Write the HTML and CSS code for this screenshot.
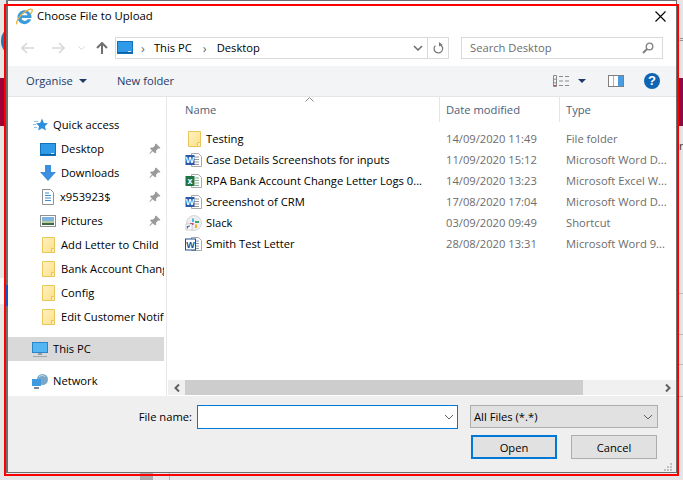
FILE: index.html
```html
<!DOCTYPE html>
<html lang="en">
<head>
  <meta charset="UTF-8" />
  <title>Choose File to Upload</title>
  <link rel="stylesheet" href="styles.css">
</head>
<body>

  <svg class="defs" width="0" height="0">
    <defs>
      <linearGradient id="folderFill" x1="0" y1="0" x2="1" y2="1">
        <stop offset="0" stop-color="#fff3c4"/>
        <stop offset="1" stop-color="#fcdf86"/>
      </linearGradient>
      <symbol id="folder" viewBox="0 0 13 16">
        <path d="M.5.5h12v15H.5z" fill="url(#folderFill)" stroke="#e9c65a"/>
        <path d="M9.5 15.5v-4h3v4z" fill="#fdf0b8" stroke="#e9c65a"/>
      </symbol>
      <symbol id="pin" viewBox="0 0 12 12">
        <path d="M7 .5L11.500 5l-1.200.8-1-.5-2.400 2.600.3 1.500-1 1L3.700 8.200 1 11l-.6-.6L3 7.500 1 5.400l1-1 1.500.3 2.700-2.300-.4-1z" fill="#9a9a9a"/>
      </symbol>
      <symbol id="desktop" viewBox="0 0 16 13">
        <rect x=".5" y=".5" width="15" height="12" fill="#2f9ae8" stroke="#1273bd"/>
        <path d="M1 11.500h14" stroke="#0b5c9c"/>
        <path d="M11 10.500h3" stroke="#cfe9fb"/>
      </symbol>
      <symbol id="word" viewBox="0 0 17 16">
        <path d="M6.500 1.500h7l3 3v10h-10z" fill="#fff" stroke="#a9a9a9"/>
        <path d="M9 5h5M9 7.500h5M9 10h5M9 12.500h5" stroke="#9a9a9a"/>
        <rect x=".5" y="3" width="9" height="10" fill="#2b5aa8"/>
        <text x="5" y="11.200" class="icon-letter" text-anchor="middle">W</text>
      </symbol>
    </defs>
  </svg>

  <!-- whatever is open behind the dialog -->
  <div class="behind">
    <div class="behind-band"></div>
    <div class="behind-circle"></div>
    <div class="behind-white"></div>
    <div class="behind-edge">
      <span class="behind-text">=</span>
    </div>
    <span class="behind-re">re</span>
    <div class="behind-line line-a"></div>
    <div class="behind-line line-b"></div>
    <div class="behind-line line-c"></div>
    <div class="behind-line line-d"></div>
    <div class="behind-block"></div>
    <div class="behind-rule"></div>
  </div>

  <div class="dialog">
    <div class="titlebar">
      <svg class="ie-icon" viewBox="0 0 17 17" width="17" height="17">
        <path d="M1.500 9a7 7 0 0 1 13.800-1.500l.2 2.500H5.500a3.200 3.200 0 0 0 6 1.200h3.700A7 7 0 0 1 1.500 9zM5.500 7.300h6.200a3.200 3.200 0 0 0-6.200 0z" fill="#3a9bdc"/>
        <path d="M1 16.200C-.5 14.500 3 8 8 4.500c3.500-2.500 7-4 8-3 .8 .9-.2 2.800-1.500 4.500" fill="none" stroke="#e8b23a" stroke-width="1.300"/>
      </svg>
      <span class="title">Choose File to Upload</span>
      <svg class="close-icon" viewBox="0 0 11 11" width="11" height="11">
        <path d="M.5.5l10 10M10.500.5l-10 10" stroke="#000" stroke-width="1.100"/>
      </svg>
    </div>

    <div class="navrow">
      <div class="nav-buttons">
        <svg viewBox="0 0 13 12" width="13" height="12"><path d="M6 1L1 6l5 5M1 6h12" fill="none" stroke="#d8d8d8" stroke-width="1.600"/></svg>
        <svg class="nav-forward" viewBox="0 0 13 12" width="13" height="12"><path d="M7 1l5 5-5 5M12 6H0" fill="none" stroke="#d8d8d8" stroke-width="1.600"/></svg>
        <svg class="nav-down" viewBox="0 0 7 4" width="7" height="4"><path d="M.5.500L3.500 3.500 6.500.5" fill="none" stroke="#d8d8d8"/></svg>
        <svg class="nav-up" viewBox="0 0 12 12" width="12" height="12"><path d="M1 6l5-5 5 5M6 1v11" fill="none" stroke="#707070" stroke-width="2"/></svg>
      </div>
      <div class="address">
        <svg class="address-pc" viewBox="0 0 16 13" width="16" height="13"><use href="#desktop"/></svg>
        <span class="crumb-sep">&#8250;</span>
        <span class="crumb">This PC</span>
        <span class="crumb-sep second">&#8250;</span>
        <span class="crumb">Desktop</span>
        <svg class="address-drop" viewBox="0 0 10 6" width="10" height="6"><path d="M1 1l4 4 4-4" fill="none" stroke="#6b6b6b" stroke-width="1.500"/></svg>
        <span class="address-refresh">
          <svg viewBox="0 0 11 12" width="11" height="12"><path d="M8 3.200A4.300 4.300 0 1 1 3 3.100" fill="none" stroke="#7a7a7a" stroke-width="1.300" transform="rotate(-10 5.500 7)"/><path d="M6 0l3.500 2.800-3.500 1.800z" fill="#7a7a7a"/></svg>
        </span>
      </div>
      <div class="search">
        <span class="search-text">Search Desktop</span>
        <svg viewBox="0 0 12 12" width="12" height="12"><circle cx="7.500" cy="4.500" r="3.300" fill="none" stroke="#808080" stroke-width="1.300"/><path d="M5 7l-4 4" stroke="#808080" stroke-width="2"/></svg>
      </div>
    </div>

    <div class="toolbar">
      <span class="tool organise">Organise</span>
      <span class="caret organise-caret"></span>
      <span class="tool new-folder">New folder</span>
      <svg class="view-icon" viewBox="0 0 16 12" width="16" height="12">
        <path d="M.5.500h3v11h-3zM.5 4.200h3M.5 7.800h3" fill="none" stroke="#8a8a8a"/>
        <path d="M6 1.500h4M12 1.500h4M6 6h4M12 6h4M6 10.500h4M12 10.500h4" stroke="#8a8a8a"/>
        <path d="M1 10h2v1H1z" fill="#d04040"/>
      </svg>
      <span class="caret view-caret"></span>
      <svg class="pane-icon" viewBox="0 0 16 12" width="16" height="12">
        <rect x=".5" y=".5" width="15" height="11" fill="#fff" stroke="#7f7f7f"/>
        <path d="M5.500 1v10" stroke="#b0b0b0"/>
        <rect x="10" y="1" width="5" height="10" fill="#4a9be0"/>
      </svg>
      <svg class="help-icon" viewBox="0 0 16 16" width="16" height="16">
        <circle cx="8" cy="8" r="8" fill="#0f64b4"/>
        <text x="8" y="12.400" class="help-mark" text-anchor="middle">?</text>
      </svg>
    </div>

    <div class="main">
      <div class="sidebar">
        <div class="side-row top first">
          <svg class="side-icon" viewBox="0 0 16 14" width="16" height="14">
            <path d="M10 .5L11.900 5l4.100.3-3.100 2.900 1 4.300L10 10.200 6.100 12.500l1-4.300L4 5.300 8.100 5z" fill="#2d8fdc"/>
            <path d="M2 3.500h4M1 6.500h3M2 9.500h3" stroke="#8cc4ee"/>
          </svg>
          <span class="side-text">Quick access</span>
        </div>
        <div class="side-row">
          <svg class="side-icon" viewBox="0 0 16 13" width="16" height="13"><use href="#desktop"/></svg>
          <span class="side-text">Desktop</span>
          <svg class="pin" viewBox="0 0 12 12" width="12" height="12"><use href="#pin"/></svg>
        </div>
        <div class="side-row">
          <svg class="side-icon" viewBox="0 0 16 16" width="16" height="16"><path d="M5 0h6v7h5l-8 9-8-9h5z" fill="#3a8fe0"/></svg>
          <span class="side-text">Downloads</span>
          <svg class="pin" viewBox="0 0 12 12" width="12" height="12"><use href="#pin"/></svg>
        </div>
        <div class="side-row">
          <svg class="side-icon" viewBox="0 0 16 16" width="16" height="16">
            <path d="M2.500.5h8l3 3v12h-11z" fill="#fff" stroke="#8f8f8f"/>
            <path d="M5 4h4M5 6.500h6M5 9h6M5 11.500h6" stroke="#3a8fd0"/>
          </svg>
          <span class="side-text tight">x953923$</span>
          <svg class="pin" viewBox="0 0 12 12" width="12" height="12"><use href="#pin"/></svg>
        </div>
        <div class="side-row">
          <svg class="side-icon" viewBox="0 0 16 12" width="16" height="12">
            <rect x=".5" y=".5" width="15" height="11" fill="#fff" stroke="#8f8f8f"/>
            <rect x="2" y="2" width="12" height="4" fill="#7fb2dc"/>
            <rect x="2" y="6" width="12" height="2" fill="#b9c9a0"/>
            <rect x="2" y="8" width="12" height="2" fill="#3f6a4a"/>
          </svg>
          <span class="side-text">Pictures</span>
          <svg class="pin" viewBox="0 0 12 12" width="12" height="12"><use href="#pin"/></svg>
        </div>
        <div class="side-row">
          <svg class="side-icon side-folder" viewBox="0 0 13 16" width="13" height="16"><use href="#folder"/></svg>
          <span class="side-text">Add Letter to Child</span>
        </div>
        <div class="side-row">
          <svg class="side-icon side-folder" viewBox="0 0 13 16" width="13" height="16"><use href="#folder"/></svg>
          <span class="side-text">Bank Account Change</span>
        </div>
        <div class="side-row">
          <svg class="side-icon side-folder" viewBox="0 0 13 16" width="13" height="16"><use href="#folder"/></svg>
          <span class="side-text">Config</span>
        </div>
        <div class="side-row">
          <svg class="side-icon side-folder" viewBox="0 0 13 16" width="13" height="16"><use href="#folder"/></svg>
          <span class="side-text">Edit Customer Notifications</span>
        </div>
        <div class="side-row top gap selected">
          <svg class="side-icon" viewBox="0 0 16 15" width="16" height="15">
            <rect x=".5" y=".5" width="15" height="10" fill="#53b6f2" stroke="#2a86c8"/>
            <path d="M6 12h4" stroke="#9a9a9a" stroke-width="2"/>
            <path d="M1 14.500h14" stroke="#a0a8b0"/>
          </svg>
          <span class="side-text">This PC</span>
        </div>
        <div class="side-row top gap">
          <svg class="side-icon" viewBox="0 0 16 15" width="16" height="15">
            <circle cx="10.500" cy="5.500" r="5.500" fill="#7aa6c8"/>
            <path d="M7 3c2-2 5-2 6 0" stroke="#cfe2f0" fill="none"/>
            <rect x="0" y="5" width="9" height="7" fill="#3f9ae0"/>
            <path d="M2 14h5" stroke="#7a8a9a" stroke-width="2"/>
          </svg>
          <span class="side-text">Network</span>
        </div>
      </div>

      <div class="list">
        <div class="list-head">
          <svg class="sort-mark" viewBox="0 0 9 5" width="9" height="5"><path d="M.5 4.500l4-4 4 4" fill="none" stroke="#8a8a8a"/></svg>
          <div class="col col-name">Name</div>
          <div class="col col-date">Date modified</div>
          <div class="col col-type">Type</div>
        </div>

        <div class="rows">
          <div class="file-row">
            <div class="file-name">
              <span class="file-icon"><svg class="folder-file" viewBox="0 0 13 16" width="13" height="16"><use href="#folder"/></svg></span>
              <span>Testing</span>
            </div>
            <div class="file-date">14/09/2020 11:49</div>
            <div class="file-type">File folder</div>
          </div>
          <div class="file-row">
            <div class="file-name">
              <span class="file-icon"><svg viewBox="0 0 17 16" width="17" height="16"><use href="#word"/></svg></span>
              <span>Case Details Screenshots for inputs</span>
            </div>
            <div class="file-date">11/09/2020 15:12</div>
            <div class="file-type">Microsoft Word D...</div>
          </div>
          <div class="file-row">
            <div class="file-name">
              <span class="file-icon">
                <svg viewBox="0 0 17 16" width="17" height="16">
                  <path d="M6.500 1.500h7l3 3v10h-10z" fill="#fff" stroke="#a9a9a9"/>
                  <path d="M10 5h4M10 7.500h4M10 10h4M10 12.500h4" stroke="#7fae8f"/>
                  <rect x=".5" y="3" width="9" height="10" fill="#1f7244"/>
                  <text x="5" y="11.200" class="icon-letter" text-anchor="middle">x</text>
                </svg>
              </span>
              <span>RPA Bank Account Change Letter Logs 0...</span>
            </div>
            <div class="file-date">14/09/2020 13:23</div>
            <div class="file-type">Microsoft Excel W...</div>
          </div>
          <div class="file-row">
            <div class="file-name">
              <span class="file-icon"><svg viewBox="0 0 17 16" width="17" height="16"><use href="#word"/></svg></span>
              <span>Screenshot of CRM</span>
            </div>
            <div class="file-date">17/08/2020 17:04</div>
            <div class="file-type">Microsoft Word D...</div>
          </div>
          <div class="file-row">
            <div class="file-name">
              <span class="file-icon">
                <svg viewBox="0 0 17 16" width="17" height="16">
                  <circle cx="9" cy="8" r="7.500" fill="#eeeeee" stroke="#d8d8d8"/>
                  <path d="M8 3.500v3.500" stroke="#4fb8e0" stroke-width="2"/>
                  <path d="M10 7h4" stroke="#3aa870" stroke-width="2"/>
                  <path d="M11 9.500v3.500" stroke="#e8b23a" stroke-width="2"/>
                  <path d="M5 9h3.500" stroke="#c8386a" stroke-width="2"/>
                  <rect x="1" y="9" width="6" height="6" fill="#fff" stroke="#b0b0b0" stroke-width=".6"/>
                  <path d="M2.500 13.500V11.500L5 11" fill="none" stroke="#2b6cc0" stroke-width="1.200"/>
                </svg>
              </span>
              <span>Slack</span>
            </div>
            <div class="file-date">03/09/2020 09:49</div>
            <div class="file-type">Shortcut</div>
          </div>
          <div class="file-row">
            <div class="file-name">
              <span class="file-icon">
                <svg viewBox="0 0 17 16" width="17" height="16">
                  <path d="M6.500 1.500h7l3 3v10h-10z" fill="#fff" stroke="#a9a9a9"/>
                  <path d="M9 5h5M9 7.500h5M9 10h5M9 12.500h5" stroke="#8aa0c0"/>
                  <rect x=".5" y="3" width="10" height="11" fill="#fff" stroke="#1d4f91"/>
                  <text x="5.500" y="12" class="icon-letter old-word" text-anchor="middle">W</text>
                </svg>
              </span>
              <span>Smith Test Letter</span>
            </div>
            <div class="file-date">28/08/2020 13:31</div>
            <div class="file-type">Microsoft Word 9...</div>
          </div>
        </div>

        <div class="hscroll">
          <span class="scroll-btn">
            <svg viewBox="0 0 6 8" width="6" height="8"><path d="M5 .5L1.500 4 5 7.500" fill="none" stroke="#606060" stroke-width="2"/></svg>
          </span>
          <span class="scroll-thumb"></span>
          <span class="scroll-end">
            <svg viewBox="0 0 6 8" width="6" height="8"><path d="M1 .5L4.500 4 1 7.500" fill="none" stroke="#606060" stroke-width="2"/></svg>
          </span>
        </div>
      </div>
    </div>

    <div class="bottom">
      <div class="name-row">
        <label class="name-label" for="filename">File name:</label>
        <div class="name-box">
          <input id="filename" type="text" />
          <svg viewBox="0 0 10 6" width="10" height="6"><path d="M1 1l4 4 4-4" fill="none" stroke="#606060"/></svg>
        </div>
        <div class="type-select">
          <span>All Files (*.*)</span>
          <svg viewBox="0 0 10 6" width="10" height="6"><path d="M1 1l4 4 4-4" fill="none" stroke="#606060"/></svg>
        </div>
      </div>
      <div class="button-row">
        <button class="btn btn-default">Open</button>
        <button class="btn">Cancel</button>
      </div>
      <svg class="grip" viewBox="0 0 8 8" width="8" height="8">
        <path d="M6 0h2v2H6zM3 3h2v2H3zM6 3h2v2H6zM0 6h2v2H0zM3 6h2v2H3zM6 6h2v2H6z" fill="#c0c0c0"/>
      </svg>
    </div>
  </div>

  <div class="blue-tick"></div>
  <div class="red-frame"></div>

</body>
</html>
```

FILE: styles.css
```css
* {
  box-sizing: border-box;
}

html, body {
  height: 100%;
}

body {
  margin: 0;
  overflow: hidden;
  background-color: #e6e6e6;
  font-family: "Open Sans", "Liberation Sans", sans-serif;
  font-size: 11.2px;
  color: #000;
}

.defs {
  position: absolute;
}

.icon-letter {
  font-family: "Liberation Sans", sans-serif;
  font-size: 9px;
  font-weight: bold;
  fill: #fff;
}

.old-word {
  fill: #1d4f91;
}

.help-mark {
  font-family: "Liberation Sans", sans-serif;
  font-size: 13px;
  font-weight: bold;
  fill: #fff;
}

/* stuff behind the dialog */
.behind-band {
  position: absolute;
  left: 0;
  top: 78px;
  width: 683px;
  height: 48px;
  background: linear-gradient(to right, #a00038, #8a0a4a);
}

.behind-circle {
  position: absolute;
  left: 1px;
  top: 27px;
  width: 24px;
  height: 28px;
  border-radius: 50%;
  background-color: #1f78b4;
}

.behind-white {
  position: absolute;
  left: 0;
  top: 278px;
  width: 6px;
  height: 26px;
  background-color: #f8f8f8;
}

.behind-edge {
  position: absolute;
  left: 677px;
  top: 0;
  width: 6px;
  height: 78px;
}

.behind-text {
  position: absolute;
  left: 2px;
  top: 31px;
  color: #555;
}

.behind-re {
  position: absolute;
  left: 679px;
  top: 138px;
  color: #333;
}

.behind-line {
  position: absolute;
  left: 677px;
  width: 6px;
  height: 1px;
  background-color: #bdbdbd;
}

.line-a { top: 293px; }
.line-b { top: 334px; }
.line-c { top: 364px; }
.line-d { top: 396px; }

.behind-block {
  position: absolute;
  left: 140px;
  top: 473px;
  width: 13px;
  height: 7px;
  background-color: #ababab;
}

.behind-rule {
  position: absolute;
  left: 169px;
  top: 473px;
  width: 1px;
  height: 7px;
  background-color: #b5b5b5;
}

.dialog {
  position: absolute;
  left: 6px;
  top: 0;
  width: 671px;
  height: 473px;
  display: flex;
  flex-direction: column;
  background-color: white;
  border: 1px solid #6f6f6f;
  border-left-width: 2px;
}

.blue-tick {
  position: absolute;
  left: 6px;
  top: 285px;
  width: 2px;
  height: 21px;
  background-color: #0b57c4;
}

.red-frame {
  position: absolute;
  left: 4px;
  top: 4px;
  width: 675px;
  height: 472px;
  border: 2px solid #fe0000;
  pointer-events: none;
}

/* title */
.titlebar {
  height: 31px;
  flex-shrink: 0;
  display: flex;
  align-items: center;
  padding-left: 8px;
  padding-right: 10px;
}

.title {
  margin-left: 4px;
  margin-top: -2px;
  font-size: 11.4px;
}

.close-icon {
  margin-left: auto;
}

/* back/forward, address, search */
.navrow {
  height: 34px;
  flex-shrink: 0;
  display: flex;
  padding-top: 5px;
}

.nav-buttons {
  width: 107px;
  height: 22px;
  display: flex;
  align-items: center;
  padding-left: 13px;
}

.nav-forward {
  margin-left: 18px;
}

.nav-down {
  margin-left: 13px;
}

.nav-up {
  margin-left: 11px;
}

.address {
  width: 334px;
  height: 22px;
  display: flex;
  align-items: center;
  border: 1px solid #d9d9d9;
  padding-left: 1px;
}

.address-pc {
  margin-top: -2px;
}

.crumb {
  margin-top: -2px;
}

.crumb-sep {
  margin-left: 8px;
  margin-right: 9px;
  color: #6a6a6a;
  font-size: 13px;
}

.crumb-sep.second {
  margin-left: 11px;
  margin-right: 10px;
}

.address-drop {
  margin-left: auto;
  margin-right: 4px;
}

.address-refresh {
  width: 21px;
  height: 20px;
  border-left: 1px solid #d9d9d9;
  display: flex;
  align-items: center;
  justify-content: center;
}

.search {
  width: 202px;
  height: 22px;
  margin-left: 12px;
  display: flex;
  align-items: center;
  justify-content: space-between;
  border: 1px solid #d9d9d9;
  padding-left: 8px;
  padding-right: 8px;
  color: #6d6d6d;
}

.search-text {
  margin-top: -2px;
}

/* organise bar */
.toolbar {
  height: 31px;
  flex-shrink: 0;
  display: flex;
  align-items: center;
  background-color: #f3f4f6;
  border-bottom: 1px solid #e4e5e7;
  padding-left: 18px;
}

.tool {
  margin-top: -2px;
  color: #1e3a66;
}

.caret {
  width: 0;
  height: 0;
  border-left: 4px solid transparent;
  border-right: 4px solid transparent;
  border-top: 4px solid #1e3a66;
}

.organise-caret {
  margin-left: 6px;
}

.new-folder {
  margin-left: 30px;
}

.view-icon {
  margin-left: auto;
}

.view-caret {
  margin-left: 9px;
}

.pane-icon {
  margin-left: 22px;
}

.help-icon {
  margin-left: 20px;
  margin-right: 16px;
}

/* nav pane and file list */
.main {
  flex: 1;
  min-height: 0;
  display: flex;
}

.sidebar {
  width: 159px;
  flex-shrink: 0;
  border-right: 1px solid #e8e8e8;
  padding-top: 16px;
  padding-right: 2px;
  overflow: hidden;
}

.side-row {
  height: 24px;
  display: flex;
  align-items: center;
  padding-left: 32px;
  padding-right: 3px;
  white-space: nowrap;
  overflow: hidden;
}

.side-row.top {
  padding-left: 24px;
}

.side-row.gap {
  margin-top: 8px;
}

.side-row.selected {
  background-color: #d9d9d9;
}

.side-text {
  margin-top: -2px;
}

.side-icon {
  flex-shrink: 0;
  margin-right: 5px;
}

.side-folder {
  margin-left: 2px;
  margin-right: 6px;
}

.tight {
  margin-left: -1px;
}

.pin {
  flex-shrink: 0;
  margin-left: auto;
}

.list {
  flex: 1;
  min-width: 0;
  display: flex;
  flex-direction: column;
  padding-left: 1px;
}

.list-head {
  position: relative;
  height: 25px;
  flex-shrink: 0;
  display: flex;
  color: #4c607a;
}

.sort-mark {
  position: absolute;
  left: 137px;
  top: 0;
}

.col {
  display: flex;
  align-items: center;
  border-right: 1px solid #e5e5e5;
  padding-left: 6px;
}

.col-name {
  width: 272px;
  padding-left: 17px;
}

.col-date {
  width: 120px;
}

.col-type {
  flex: 1;
  border-right: none;
}

.rows {
  flex: 1;
  padding-top: 6px;
}

.file-row {
  height: 21px;
  display: flex;
  align-items: center;
  white-space: nowrap;
}

.file-name {
  width: 271px;
  display: flex;
  align-items: center;
  padding-left: 17px;
}

.file-icon {
  width: 21px;
  display: flex;
}

.folder-file {
  margin-left: 3px;
}

.file-date {
  width: 120px;
  padding-left: 7px;
  color: #6d6d6d;
}

.file-type {
  padding-left: 7px;
  color: #6d6d6d;
}

.hscroll {
  height: 15px;
  margin-bottom: 1px;
  flex-shrink: 0;
  display: flex;
  background-color: #f0f0f0;
}

.scroll-btn {
  width: 17px;
  display: flex;
  align-items: center;
  justify-content: center;
}

.scroll-thumb {
  width: 398px;
  background-color: #cdcdcd;
}

.scroll-end {
  flex: 1;
  display: flex;
  align-items: center;
  justify-content: flex-end;
  padding-right: 5px;
}

/* file name and buttons */
.bottom {
  position: relative;
  height: 76px;
  flex-shrink: 0;
  background-color: #efefef;
  padding-top: 9px;
}

.name-row {
  display: flex;
  align-items: flex-start;
}

.name-label {
  width: 184px;
  height: 24px;
  line-height: 24px;
  text-align: right;
}

.name-box {
  width: 261px;
  height: 24px;
  margin-left: 5px;
  display: flex;
  align-items: center;
  background-color: white;
  border: 1px solid #0078d7;
  padding-right: 3px;
}

.name-box input {
  flex: 1;
  min-width: 0;
  height: 100%;
  border: none;
  outline: none;
  background: transparent;
}

.type-select {
  width: 188px;
  height: 23px;
  margin-left: 12px;
  display: flex;
  align-items: center;
  justify-content: space-between;
  background-color: #e1e1e1;
  border: 1px solid #adadad;
  padding-left: 3px;
  padding-right: 4px;
}

.button-row {
  display: flex;
  justify-content: flex-end;
  gap: 14px;
  margin-top: 6px;
  padding-right: 19px;
}

.btn {
  width: 86px;
  height: 24px;
  padding: 0;
  background-color: #e1e1e1;
  border: 1px solid #adadad;
  font-family: inherit;
  font-size: 11.2px;
  color: #000;
}

.btn-default {
  border: 2px solid #0078d7;
}

.grip {
  position: absolute;
  right: 4px;
  bottom: 1px;
}
```
